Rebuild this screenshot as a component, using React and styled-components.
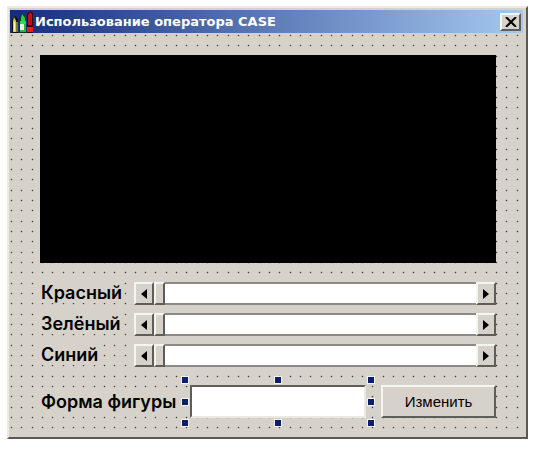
import { useId } from "react";
import styled, { createGlobalStyle } from "styled-components";

const STEP = 8 * 1.29;

function gridPath(columns, rows) {
  let d = "";
  for (let row = 0; row < rows; row++) {
    for (let col = 0; col < columns; col++) {
      d += `M${Math.round(col * STEP) + 1} ${Math.round(row * STEP) + 1}h1v1h-1z`;
    }
  }
  return d;
}

const GRID = gridPath(50, 39);

const HANDLES = [
  ["0%", "0%"],
  ["50%", "0%"],
  ["100%", "0%"],
  ["0%", "50%"],
  ["100%", "50%"],
  ["0%", "100%"],
  ["50%", "100%"],
  ["100%", "100%"],
];

function PencilsIcon() {
  return (
    <svg width="22" height="22" viewBox="0 0 22 22" aria-hidden="true">
      <path d="M1 22V8l3-3 3 3v14z" fill="#111" />
      <path d="M2 21V10l1-4 2 4v11z" fill="#d8cf3c" />
      <path d="M3 11h1v9H3z" fill="#fff9a8" />
      <path d="M5 21V11h2v10z" fill="#7d7a28" />
      <path d="M8 22V8l3-6 4 5v15z" fill="#06371a" />
      <path d="M10 7l1-4 3 4v3h-4z" fill="#1ed63c" />
      <path d="M9 10h6v3H9z" fill="#29e04a" />
      <path d="M9 13h4v6H9z" fill="#e9f5e4" />
      <path d="M9 19h6v2H9zM13 13h2v6h-2z" fill="#18c038" />
      <path d="M16 22V3l3-3 3 2v20z" fill="#3c0008" />
      <path d="M17 4l2-3 2 2v11h-4z" fill="#c01018" />
      <path d="M16 16h6v5h-6z" fill="#f01818" />
    </svg>
  );
}

function ColorScroll({ label }) {
  const id = useId();

  return (
    <>
      <LabelCell>
        <Label id={id}>{label}</Label>
      </LabelCell>
      <ScrollBar role="group" aria-labelledby={id}>
        <ArrowButton type="button" aria-label="Меньше">
          <svg width="6" height="10" viewBox="0 0 6 10">
            <path d="M6 0v10L0 5z" />
          </svg>
        </ArrowButton>
        <Track type="range" min="0" max="255" defaultValue="0" aria-labelledby={id} />
        <ArrowButton type="button" aria-label="Больше">
          <svg width="6" height="10" viewBox="0 0 6 10">
            <path d="M0 0v10l6-5z" />
          </svg>
        </ArrowButton>
      </ScrollBar>
    </>
  );
}

export default function App() {
  return (
    <>
      <GlobalStyle />
      <Window>
        <TitleBar>
          <PencilsIcon />
          <Title>Использование оператора CASE</Title>
          <CloseButton type="button" aria-label="Закрыть">
            <svg width="12" height="10" viewBox="0 0 12 10">
              <path d="M1 0l10 10M11 0L1 10" stroke="#000" strokeWidth="2" />
            </svg>
          </CloseButton>
        </TitleBar>
        <Form>
          <Grid aria-hidden="true">
            <path d={GRID} fill="#45423e" stroke="#45423e" strokeOpacity="0.4" />
          </Grid>
          <Canvas />
          <Scrolls>
            <ColorScroll label="Красный" />
            <ColorScroll label="Зелёный" />
            <ColorScroll label="Синий" />
          </Scrolls>
          <ShapeRow>
            <ShapeLabel as="label" htmlFor="shape">
              Форма фигуры
            </ShapeLabel>
            <Selection>
              <ShapeInput id="shape" type="text" />
              <Handles>
                {HANDLES.map(([x, y]) => (
                  <Handle key={x + y} $x={x} $y={y} />
                ))}
              </Handles>
            </Selection>
            <ChangeButton type="button">Изменить</ChangeButton>
          </ShapeRow>
        </Form>
      </Window>
    </>
  );
}

const GlobalStyle = createGlobalStyle`
  * {
    box-sizing: border-box;
  }

  body {
    margin: 0;
    background: #ffffff;
    font-family: "Liberation Sans", Arial, sans-serif;
  }
`;

const Window = styled.main`
  margin: 6px 6px 10px 7px;
  padding: 2px 3px 3px 1px;
  background: #d6d1c9;
  border: 2px solid #5a5854;
  border-top-color: #ece9df;
  border-left-color: #ece9df;
`;

const TitleBar = styled.header`
  display: flex;
  align-items: center;
  height: 23px;
  padding: 0 2px 0 1px;
  background: linear-gradient(to right, #142c7c, #a4c8f0);
`;

const Title = styled.h1`
  flex: 1;
  margin: 0 0 0 2px;
  color: #ffffff;
  font: bold 13px/20px "DejaVu Sans", Verdana, sans-serif;
  white-space: nowrap;
`;

const RaisedButton = styled.button`
  display: flex;
  align-items: center;
  justify-content: center;
  padding: 0;
  background: #d6d1c9;
  border: 2px solid #5f5d59;
  border-top-color: #f6f4ef;
  border-left-color: #f6f4ef;
`;

const CloseButton = styled(RaisedButton)`
  width: 21px;
  height: 18px;
`;

const Form = styled.div`
  position: relative;
  padding: 22px 27px 16px 30px;
`;

const Grid = styled.svg`
  position: absolute;
  top: 1px;
  left: 0;
  width: 100%;
  height: 100%;
`;

const Canvas = styled.div`
  position: relative;
  height: 208px;
  background: #000000;
`;

const Scrolls = styled.div`
  position: relative;
  display: grid;
  grid-template-columns: 94px 1fr;
  row-gap: 8px;
  margin-top: 19px;
`;

const LabelCell = styled.div`
  display: flex;
  align-items: flex-start;
`;

const Label = styled.span`
  padding-left: 1px;
  background: #d6d1c9;
  color: #000000;
  font: 600 18px/21px Inter, "Liberation Sans", sans-serif;
  white-space: nowrap;
`;

const ScrollBar = styled.div`
  display: flex;
  height: 23px;
  background: #d6d1c9;
`;

const ArrowButton = styled(RaisedButton)`
  flex: none;
  width: 20px;
`;

const Track = styled.input`
  flex: 1;
  min-width: 0;
  height: 23px;
  margin: 0;
  appearance: none;
  background: #ffffff;
  border: solid #8d8a85;
  border-width: 2px 0;

  &::-webkit-slider-thumb {
    appearance: none;
    width: 11px;
    height: 23px;
    background: #d6d1c9;
    border: 2px solid #5f5d59;
    border-top-color: #f6f4ef;
    border-left-color: #f6f4ef;
  }
`;

const ShapeRow = styled.div`
  position: relative;
  display: flex;
  align-items: center;
  margin-top: 18px;
`;

const ShapeLabel = styled(Label)`
  flex: none;
  width: 150px;
`;

const Selection = styled.div`
  position: relative;
  flex: 1;
`;

const ShapeInput = styled.input`
  display: block;
  width: 100%;
  height: 33px;
  background: #ffffff;
  border: 2px solid #ece9df;
  border-top-color: #5f5d59;
  border-left-color: #5f5d59;
`;

const Handles = styled.div`
  position: absolute;
  inset: -5px;
  pointer-events: none;
`;

const Handle = styled.span`
  position: absolute;
  top: ${(props) => props.$y};
  left: ${(props) => props.$x};
  width: 8px;
  height: 8px;
  margin: -4px;
  background: #0b1f6b;
  border: 1px solid #f4f4f8;
`;

const ChangeButton = styled(RaisedButton)`
  flex: none;
  width: 115px;
  height: 33px;
  margin-left: 15px;
  font: 15px/18px "Liberation Sans", Arial, sans-serif;
`;
